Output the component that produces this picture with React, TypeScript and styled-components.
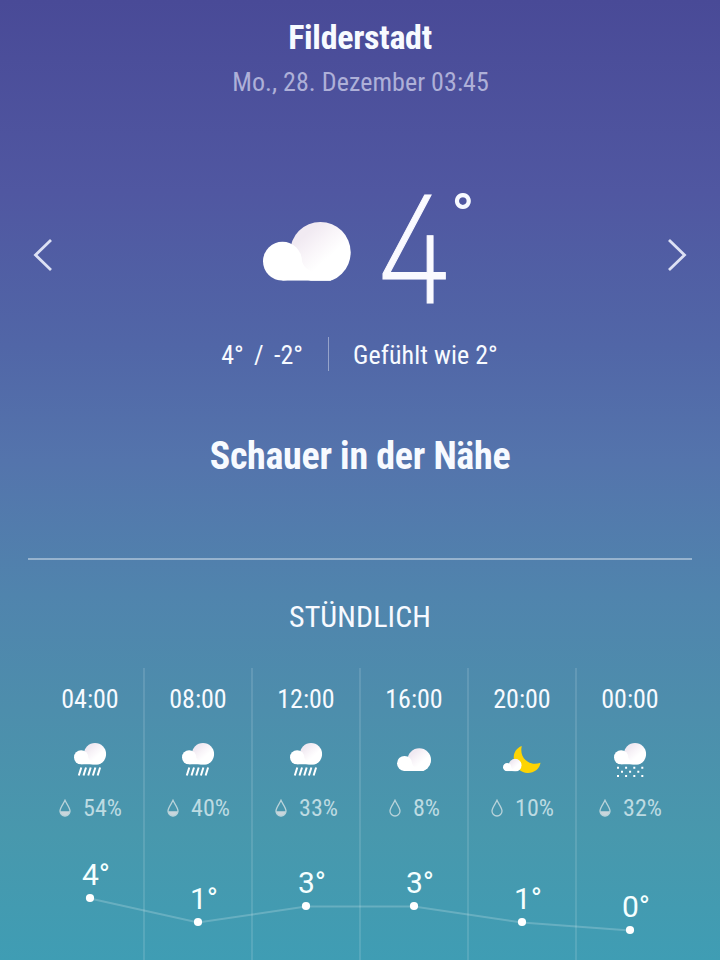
import React, { useId } from "react";
import styled, { createGlobalStyle } from "styled-components";

type Sky = "rain" | "cloud" | "night" | "snow";

interface HourProps {
  time: string;
  sky: Sky;
  chance: number;
  temp: number;
}

const hours: HourProps[] = [
  { time: "04:00", sky: "rain", chance: 54, temp: 4 },
  { time: "08:00", sky: "rain", chance: 40, temp: 1 },
  { time: "12:00", sky: "rain", chance: 33, temp: 3 },
  { time: "16:00", sky: "cloud", chance: 8, temp: 3 },
  { time: "20:00", sky: "night", chance: 10, temp: 1 },
  { time: "00:00", sky: "snow", chance: 32, temp: 0 },
];

const columnWidth = 108;

const CloudShape: React.FC = () => {
  const id = useId();
  return (
    <>
      <defs>
        <linearGradient id={`${id}fill`} x1="0.15" y1="0.3" x2="0.5" y2="0.7">
          <stop offset="0" stopColor="#f1eaf2" />
          <stop offset="0.5" stopColor="#f9f5f9" />
          <stop offset="1" stopColor="#ffffff" />
        </linearGradient>
        <clipPath id={`${id}clip`}>
          <rect x="-1" y="-1" width="90" height="59.8" />
        </clipPath>
      </defs>
      <g clipPath={`url(#${id}clip)`}>
        <circle cx="57.4" cy="30.3" r="30.3" fill={`url(#${id}fill)`} />
        <circle cx="19.5" cy="39.3" r="19.5" fill="#fff" />
        <path d="M19.500 39.300H39C41 47 50 53 68 54V58.800H19.500z" fill="#fff" />
      </g>
    </>
  );
};

const SkyIcon: React.FC<{ sky: Sky }> = ({ sky }) => {
  if (sky === "cloud") {
    return (
      <svg width="44" height="40" viewBox="0 0 44 40">
        <g transform="translate(5 8.200) scale(0.388)">
          <CloudShape />
        </g>
      </svg>
    );
  }

  if (sky === "night") {
    return (
      <svg width="44" height="40" viewBox="0 0 44 40">
        <path
          d="M21.800 6C15.500 8.400 12.800 14 14 20.500c1.200 7 6.700 12.200 13.500 12.500 6.500.2 12-3.900 13-10.200-4.800 1.700-10.600 1.400-14.700-2.500-3.900-3.700-5.400-9-4-14.300z"
          fill="#fdd404"
        />
        <g transform="translate(3 18.800) scale(0.212)">
          <CloudShape />
        </g>
      </svg>
    );
  }

  return (
    <svg width="44" height="40" viewBox="0 0 44 40">
      <g transform="translate(6 3) scale(0.366)">
        <CloudShape />
      </g>
      {sky === "rain" ? (
        <path
          d="M13.300 27.500l-2.500 8M18 27.500l-2.500 8M22.700 27.500l-2.500 8M27.400 27.500l-2.500 8M32.100 27.500l-2.500 8"
          stroke="#fff"
          strokeWidth="2"
        />
      ) : (
        <path
          d="M9 26.700h2v2h-2zM17.100 26.700h2v2h-2zM25.300 26.700h2v2h-2zM33.300 26.700h2v2h-2zM13 30.800h2v2h-2zM21.100 30.800h2v2h-2zM29.300 30.800h2v2h-2zM9 35h2v2h-2zM17.100 35h2v2h-2zM25.300 35h2v2h-2zM33.300 35h2v2h-2z"
          fill="#fff"
        />
      )}
    </svg>
  );
};

const Drop: React.FC<{ half: boolean }> = ({ half }) => (
  <svg width="12" height="18" viewBox="0 0 12 18">
    {half && <path d="M.8 12.300h10.400a5.200 5 0 0 1-10.400 0z" fill="#c9d6dc" />}
    <path
      d="M6 1.300C4.600 4.600 1 8.700 1 12a5 5 0 0 0 10 0C11 8.700 7.400 4.600 6 1.300z"
      fill="none"
      stroke="#b9d3da"
      strokeWidth="1.300"
    />
  </svg>
);

const TempChart: React.FC = () => {
  const points = hours.map(({ temp }, i) => ({
    temp,
    x: columnWidth * i + columnWidth / 2,
    y: 100 - temp * 8,
  }));

  return (
    <Chart width="648" height="130" viewBox="0 0 648 130">
      <polyline
        points={points.map(({ x, y }) => `${x},${y + 0.5}`).join(" ")}
        fill="none"
        stroke="#fff"
        strokeOpacity="0.2"
        strokeWidth="2"
      />
      {points.map(({ x, y, temp }) => (
        <g key={x}>
          <circle cx={x} cy={y} r="4.100" fill="#fff" />
          <text x={x + 6} y={y - 13} textAnchor="middle">
            {temp}°
          </text>
        </g>
      ))}
    </Chart>
  );
};

const App: React.FC = () => {
  return (
    <>
      <GlobalStyle />
      <Screen>
        <Header>
          <City>Filderstadt</City>
          <DateLine>Mo., 28. Dezember 03:45</DateLine>
        </Header>
        <Current>
          <ArrowButton aria-label="Zurück">
            <svg width="20" height="34" viewBox="0 0 20 34">
              <path d="M18 2L2.500 17 18 32" />
            </svg>
          </ArrowButton>
          <Now>
            <svg width="88" height="59" viewBox="0 0 88 59">
              <CloudShape />
            </svg>
            <BigTemp>
              <BigDigit>4</BigDigit>
              <BigDegree>°</BigDegree>
            </BigTemp>
          </Now>
          <ArrowButton aria-label="Weiter">
            <svg width="20" height="34" viewBox="0 0 20 34">
              <path d="M2 2l15.500 15L2 32" />
            </svg>
          </ArrowButton>
        </Current>
        <Details>
          <Range>4°&nbsp; /&nbsp; -2°</Range>
          <FeelsLike>Gefühlt wie 2°</FeelsLike>
        </Details>
        <Summary>Schauer in der Nähe</Summary>
        <Divider />
        <SectionTitle>STÜNDLICH</SectionTitle>
        <Hourly>
          {hours.map(({ time, sky, chance }) => (
            <Hour key={time}>
              <Time>{time}</Time>
              <SkyIcon sky={sky} />
              <Chance>
                <Drop half={chance > 30} />
                {chance}%
              </Chance>
            </Hour>
          ))}
          <TempChart />
        </Hourly>
      </Screen>
    </>
  );
};

export default App;

const GlobalStyle = createGlobalStyle`
  * {
    box-sizing: border-box;
  }

  body {
    margin: 0;
    font-family: "Roboto Condensed", Roboto, sans-serif;
    font-stretch: 75%;
    color: #f7faff;
  }
`;

const Screen = styled.main`
  display: flex;
  flex-direction: column;
  align-items: center;
  width: 720px;
  height: 960px;
  overflow: hidden;
  background: linear-gradient(
    #494a97 0%,
    #5057a1 20%,
    #5166a7 36%,
    #5474ac 48%,
    #5084ad 62%,
    #4d8eac 74%,
    #4898ad 87%,
    #3f9db4 100%
  );
`;

const Header = styled.header`
  display: flex;
  flex-direction: column;
  align-items: center;
  padding-top: 17px;
  white-space: nowrap;
`;

const City = styled.h1`
  margin: 0;
  font-size: 34px;
  line-height: 40px;
  font-weight: 700;
  letter-spacing: -0.3px;
`;

const DateLine = styled.p`
  margin: 10px 0 0;
  padding-left: 1px;
  font-size: 26px;
  line-height: 30px;
  letter-spacing: 0.05px;
  color: #aeb0d8;
`;

const Current = styled.section`
  display: flex;
  justify-content: space-between;
  align-items: center;
  width: 654px;
  height: 120px;
  margin-top: 93px;
`;

const ArrowButton = styled.button`
  display: flex;
  padding: 9px 0 0;
  border: 0;
  background: none;

  path {
    fill: none;
    stroke: #dde1f4;
    stroke-width: 2.8;
  }
`;

const Now = styled.div`
  display: flex;
  align-items: center;
  gap: 23px;
  padding-left: 22px;

  > svg {
    margin-top: 2px;
  }
`;

const BigTemp = styled.div`
  display: flex;
  align-items: flex-start;
  height: 120px;
  font-stretch: 100%;
`;

const BigDigit = styled.span`
  width: 77px;
  font-family: Inter, sans-serif;
  font-size: 149px;
  font-weight: 200;
  line-height: 119px;
  letter-spacing: -18px;
  color: #fafaff;
  font-feature-settings: "cv02" 1, "ss01" 1;
  -webkit-text-stroke: 1.1px #fafaff;
  stroke-linejoin: round;
  transform: scaleX(0.88);
  transform-origin: left;
`;

const BigDegree = styled.span`
  width: 28px;
  font-family: Roboto, sans-serif;
  font-size: 62px;
  font-weight: 500;
  line-height: 52px;
`;

const Details = styled.div`
  display: flex;
  align-items: center;
  height: 34px;
  margin-top: 27px;
  padding-right: 1px;
  font-size: 26px;
  white-space: nowrap;
`;

const Range = styled.span`
  padding: 2px 25px 0 0;
  line-height: 32px;
  word-spacing: -0.8px;
  border-right: 1px solid rgba(255, 255, 255, 0.4);
`;

const FeelsLike = styled.span`
  padding: 2px 0 0 24px;
  line-height: 32px;
  letter-spacing: 0.05px;
`;

const Summary = styled.h2`
  margin: 63px 0 0;
  font-size: 38px;
  line-height: 44px;
  font-weight: 700;
  letter-spacing: -0.3px;
  white-space: nowrap;
`;

const Divider = styled.hr`
  width: 664px;
  height: 2px;
  margin: 80px 0 0;
  border: 0;
  background: rgba(255, 255, 255, 0.4);
`;

const SectionTitle = styled.h3`
  margin: 39px 0 0;
  font-size: 30px;
  line-height: 36px;
  font-weight: 400;
  letter-spacing: 0.1px;
`;

const Hourly = styled.section`
  position: relative;
  display: grid;
  grid-template-columns: repeat(6, ${columnWidth}px);
  height: 292px;
  margin-top: 33px;
`;

const Hour = styled.div`
  display: flex;
  flex-direction: column;
  align-items: center;
  padding-top: 16px;

  & + & {
    box-shadow: -1px 0 rgba(255, 255, 255, 0.12),
      inset 1px 0 rgba(255, 255, 255, 0.12);
  }

  > svg {
    margin-top: 25px;
  }
`;

const Time = styled.span`
  font-size: 26px;
  line-height: 31px;
`;

const Chance = styled.span`
  display: flex;
  align-items: center;
  gap: 12px;
  margin-top: 13px;
  padding-left: 1px;
  font-size: 24px;
  line-height: 30px;
  color: #bddbe2;
`;

const Chart = styled.svg`
  position: absolute;
  left: 0;
  bottom: 0;

  text {
    font-family: Roboto, sans-serif;
    font-size: 30px;
    font-stretch: 100%;
    fill: #f5ffff;
  }
`;
